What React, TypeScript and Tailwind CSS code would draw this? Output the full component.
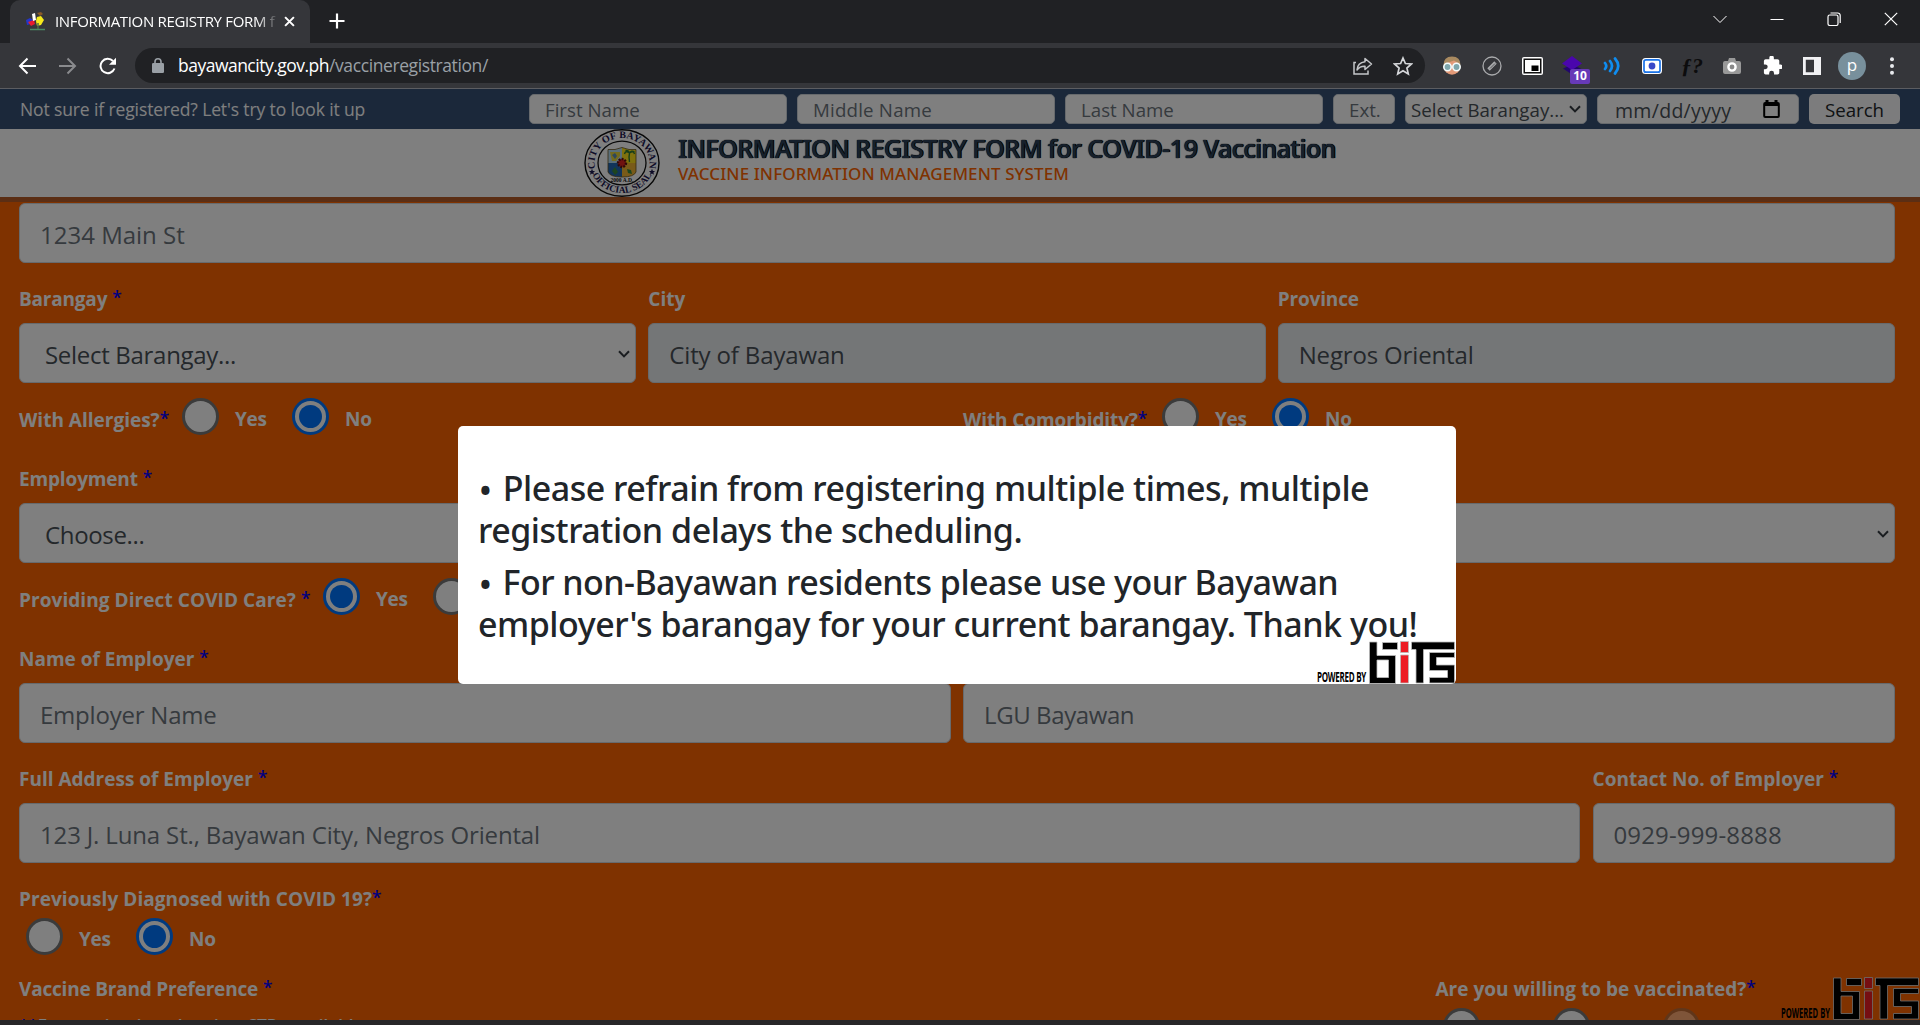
import React from 'react';

function Radio({ on, faded }: { on?: boolean; faded?: boolean }) {
  return (
    <span
      className={
        'flex size-[37px] shrink-0 items-center justify-center rounded-full border-[3px] bg-white ' +
        (on ? 'border-[#0075ff]' : 'border-[#767676]') +
        (faded ? ' opacity-45' : '')
      }
    >
      {on && <span className="size-[23px] rounded-full bg-[#0075ff]" />}
    </span>
  );
}

function Star({ gap = true }: { gap?: boolean }) {
  return <span className={'align-[2px] text-[17.5px] leading-none font-semibold text-[#0000ff] ' + (gap ? 'ml-[5px]' : '')}>*</span>;
}

function Label({ text, star, tight, className = 'h-[60px]' }: { text: string; star?: boolean; tight?: boolean; className?: string }) {
  return (
    <div className={'pt-6 text-[19px] leading-6 font-bold whitespace-nowrap text-white ' + className}>
      {text}
      {star && <Star gap={!tight} />}
    </div>
  );
}

function Field({ text = '', tone = 'placeholder', select, tracking = 'tracking-[-0.15px]' }: { text?: string; tone?: 'placeholder' | 'value' | 'disabled'; select?: boolean; tracking?: string }) {
  return (
    <div
      className={
        'flex h-[60px] items-center rounded-[6px] border border-[#ced4da] pt-1 text-[24px] whitespace-nowrap ' +
        tracking +
        (tone === 'placeholder' ? ' bg-white text-[#6c757d] ' : tone === 'value' ? ' bg-white text-[#495057] ' : ' bg-[#e9ecef] text-[#495057] ') +
        (select ? 'pr-[5px] pl-[25px]' : 'px-[20px]')
      }
    >
      <span className="grow">{text}</span>
      {select && <Chevron className="mb-[3px] h-[8px] w-[12px]" />}
    </div>
  );
}

function Chevron({ className }: { className: string }) {
  return (
    <svg viewBox="0 0 12 8" className={className} fill="none" stroke="#343a40" strokeWidth="2">
      <path d="M1 1.2 6 6.4 11 1.2" />
    </svg>
  );
}

function Options({ picked, third }: { picked?: 'Yes' | 'No'; third?: boolean }) {
  return (
    <>
      {(['Yes', 'No'] as const).map((name) => (
        <div key={name} className="flex w-[110px] shrink-0 items-center gap-4">
          <Radio on={picked === name} />
          <span className="pt-[5px] text-[19px] leading-6 font-bold tracking-[-0.3px] text-white">{name}</span>
        </div>
      ))}
      {third && <Radio faded />}
    </>
  );
}

function SearchInput({ text, className }: { text: string; className: string }) {
  return (
    <div className={'flex h-[30px] items-center rounded-[5px] border border-[#ced4da] bg-white pt-[2px] text-[18.7px] whitespace-nowrap ' + className}>
      {text}
    </div>
  );
}

function BitsLogo({ className, edge }: { className: string; edge: string }) {
  return (
    <svg viewBox="0 0 139 43" className={className}>
      <text x="0" y="41" fontFamily="Open Sans, sans-serif" fontWeight="700" fontSize="13.5" textLength="49" lengthAdjust="spacingAndGlyphs" fill="#000">
        POWERED BY
      </text>
      <g transform="translate(52.5 0.5)" fill="#000" stroke={edge} strokeWidth="0.8">
        <path d="M0 0.5h7.5v13.5h18.5v28H0zM7.5 18.5v17.5h11.5v-17.5z" fillRule="evenodd" />
        <path d="M13 1h15v7H13z" />
        <path d="M42 0.5h43v7.5H54v33.5h-7.500V8H42z" />
        <path d="M60 11h25v5H67v7.500h18v18H60v-5.500h18V29H60z" />
        <path d="M31 0h8v11h-8zM31 13.500h8v28h-8z" fill="#ed1c24" />
      </g>
    </svg>
  );
}

function Seal() {
  return (
    <svg viewBox="0 0 76 68" className="h-[68px] w-[76px]">
      <defs>
        <path id="arcTop" d="M13.250 44.900 A27.500 25 0 1 1 62.750 44.900" />
        <path id="arcBottom" d="M8.900 46.500 A32 30 0 0 0 67.100 46.500" />
      </defs>
      <ellipse cx="38" cy="34" rx="37" ry="33.300" fill="#fff" stroke="#111" strokeWidth="1.400" />
      <ellipse cx="38" cy="34" rx="24" ry="21.800" fill="#fff" stroke="#111" strokeWidth="1.300" />
      <g fontFamily="Liberation Serif, serif" fontWeight="700" fill="#1d1850">
        <text fontSize="10" letterSpacing="0.1">
          <textPath href="#arcTop" startOffset="50%" textAnchor="middle">CITY OF BAYAWAN</textPath>
        </text>
        <text fontSize="9.500">
          <textPath href="#arcBottom" startOffset="50%" textAnchor="middle">OFFICIAL SEAL</textPath>
        </text>
        <text x="38" y="53" fontSize="5.500" textAnchor="middle" fill="#111">2000 A.D.</text>
      </g>
      <path d="M0-3.200L.9-1H3.100L1.400.500 2 2.800 0 1.500-2 2.800-1.400.500-3.100-1H-.9z" transform="translate(8 43)" fill="#1d1850" />
      <path d="M0-3.200L.9-1H3.100L1.400.500 2 2.800 0 1.500-2 2.800-1.400.500-3.100-1H-.9z" transform="translate(68 43)" fill="#1d1850" />
      <path d="M24 20.500q7 1 14-2v15.500H24z" fill="#b5dcf2" />
      <path d="M38 18.500q7 3 14 2V34H38z" fill="#ffe21a" />
      <path d="M24 34h14v14q-12 0-14-5z" fill="#2268b5" />
      <path d="M38 34h14v9q-2 5-14 5z" fill="#f2b632" />
      <path d="M24 20.500q7 1 14-2 7 3 14 2v22.500q-2 5-14 5t-14-5z" fill="none" stroke="#6b5420" strokeWidth="0.800" />
      <path d="M45.500 33q-1-5 0-9m0 0q-4-3-5 1m5-1q4-3 5 1m-5-1q-1-3-4-2.500m4 2.500q2-3 5-1" stroke="#2f7d32" strokeWidth="1.400" fill="none" />
      <path d="M26 23h10v4l-4 5h-4z" fill="#e6d53b" />
      <path d="M28 26l3-2 2 3-2 3z" fill="#5c8fb5" />
      <path d="M28 42l3-4 3 5-3 3zM43 40l4 1 1 4-4-1z" fill="#3b8a3e" />
      <circle cx="38" cy="34" r="4" fill="#e02420" stroke="#5b1210" strokeWidth="2.400" strokeDasharray="1.800 1.200" />
    </svg>
  );
}

function TabStrip() {
  return (
    <div className="flex h-[43px] items-end bg-[#202124] pl-[10px]">
      <div className="flex h-full w-[300px] items-center rounded-t-[10px] bg-[#35363a] pr-[14px] pb-px pl-[16px]">
        <svg viewBox="0 0 20 20" className="size-5 shrink-0">
          <path d="M0 9l4-2 3 2-2 4-4 1z" fill="#2436c9" />
          <path d="M2 11l6-2 1 4-4 2z" fill="#e81c2e" />
          <path d="M6 3l3-1 1 7-3 1z" fill="#fff" />
          <path d="M11 6l4-1 3 4-3 5-4 1-1-5z" fill="#f6ea1c" />
          <path d="M11 2l4-1 2 2-3 2z" fill="#8a5a28" />
          <path d="M12 12v6" stroke="#4b6e46" strokeWidth="1.500" />
          <path d="M4 18.500h15" stroke="#4b8a63" strokeWidth="1.500" />
        </svg>
        <div className="ml-[9px] w-[224px] shrink-0 overflow-hidden text-[15px] tracking-[-0.33px] whitespace-nowrap text-white [mask-image:linear-gradient(to_right,#000_90%,transparent_100%)]">
          INFORMATION REGISTRY FORM f
        </div>
        <svg viewBox="0 0 12 12" className="ml-[5px] size-[11px] shrink-0" stroke="#fff" strokeWidth="2.200">
          <path d="M1.200 1.200l9.600 9.600M10.800 1.200l-9.600 9.600" />
        </svg>
      </div>
      <svg viewBox="0 0 16 16" className="mb-[14px] ml-[19px] size-4" stroke="#fff" strokeWidth="2.200">
        <path d="M8 .500v15M.500 8h15" />
      </svg>
      <div className="ml-auto flex h-full items-center gap-[43px] pr-[22px] pb-[6px]">
        <svg viewBox="0 0 14 14" className="size-[14px]" fill="none" stroke="#fff" strokeWidth="1">
          <path d="M.500 4 7 10.500 13.500 4" />
        </svg>
        <svg viewBox="0 0 14 14" className="size-[14px]" stroke="#fff" strokeWidth="1">
          <path d="M.500 7.500h13" />
        </svg>
        <svg viewBox="0 0 14 14" className="size-[14px]" fill="none" stroke="#fff" strokeWidth="1.200">
          <rect x="1" y="3" width="10" height="10.500" rx="1.800" />
          <path d="M3.500 1h7.200a2.500 2.500 0 0 1 2.500 2.500V11" />
        </svg>
        <svg viewBox="0 0 14 14" className="size-[14px]" stroke="#fff" strokeWidth="1.200">
          <path d="M.800.800l12.400 12.400M13.200.800L.800 13.200" />
        </svg>
      </div>
    </div>
  );
}

function Extensions() {
  return (
    <div className="flex items-center">
      <div className="flex w-10 justify-center">
        <svg viewBox="0 0 20 20" className="size-5">
          <circle cx="10" cy="10.500" r="8.300" fill="#e39a78" />
          <path d="M1.500 9q0-8.500 8.500-8.500T18.500 9q-3-3-6.500-4.500Q6 6 1.500 9z" fill="#a98a60" />
          <circle cx="5.500" cy="11" r="3.700" fill="#7fa7ac" stroke="#f4fbfb" strokeWidth="1.600" />
          <circle cx="14.500" cy="11" r="3.700" fill="#7fa7ac" stroke="#f4fbfb" strokeWidth="1.600" />
        </svg>
      </div>
      <div className="flex w-10 justify-center">
        <svg viewBox="0 0 20 20" className="size-5" fill="none" stroke="#a9aaac">
          <circle cx="10" cy="10" r="9" strokeWidth="1.300" />
          <path d="M6.500 13.500l7-7" strokeWidth="3.400" />
          <path d="M8 12.500l5-5" strokeWidth="1" stroke="#55565a" />
        </svg>
      </div>
      <div className="flex w-10 justify-center">
        <svg viewBox="0 0 21 18" className="h-[18px] w-[21px]">
          <rect width="21" height="18" rx="2" fill="#fff" />
          <rect x="2.250" y="2.250" width="16.500" height="13.500" fill="#fff" stroke="#111" strokeWidth="1.500" />
          <rect x="9.500" y="8.500" width="7" height="5.500" fill="#000" />
        </svg>
      </div>
      <div className="relative flex w-10 justify-center">
        <svg viewBox="0 0 20 20" className="size-5">
          <path d="M1 12.500l9-4 9 4-9 6z" fill="#23066e" />
          <path d="M0 7.500L10 0l10 7.500L10 14z" fill="#4a06ad" />
        </svg>
        <span className="absolute top-[13px] left-[18px] flex h-[15px] w-5 items-center justify-center rounded-[2px] bg-[#673ab7] text-[12px] font-bold text-white">10</span>
      </div>
      <div className="flex w-10 justify-center">
        <svg viewBox="0 0 18 18" className="size-[18px]" fill="none" stroke="#0f8df0" strokeWidth="2.700" strokeLinecap="round">
          <path d="M2 6q2.500 3 0 6M7 4q4 5 0 10M12 1.500q6.500 7.500 0 15" />
        </svg>
      </div>
      <div className="flex w-10 justify-center">
        <svg viewBox="0 0 20 16" className="h-4 w-5">
          <rect width="20" height="16" rx="3.500" fill="#fff" />
          <rect x="2" y="1.800" width="16" height="12.400" rx="2" fill="#fff" stroke="#1a73e8" strokeWidth="1.700" />
          <circle cx="10" cy="8" r="3.400" fill="#3949c8" />
        </svg>
      </div>
      <div className="flex w-10 justify-center font-[Liberation_Serif,serif] text-[22px] leading-5 font-bold text-[#0c0c0d] italic">ƒ?</div>
      <div className="flex w-10 justify-center">
        <svg viewBox="0 0 18 18" className="size-[18px]">
          <path d="M2 4h3l1-3h6l1 3h3q2 0 2 2v9q0 2-2 2H2q-2 0-2-2V6q0-2 2-2z" fill="#999" />
          <circle cx="9" cy="10" r="3.600" fill="#888" stroke="#fff" strokeWidth="2.400" />
        </svg>
      </div>
      <div className="flex w-10 justify-center">
        <svg viewBox="1 1.500 21 21" className="size-[19px]" fill="#fff">
          <path d="M20.500 11H19V7a2 2 0 0 0-2-2h-4V3.500a2.500 2.500 0 0 0-5 0V5H4a2 2 0 0 0-2 2v3.800h1.500a2.700 2.700 0 0 1 0 5.400H2V20a2 2 0 0 0 2 2h3.800v-1.500a2.700 2.700 0 0 1 5.400 0V22H17a2 2 0 0 0 2-2v-4h1.500a2.500 2.500 0 0 0 0-5z" />
        </svg>
      </div>
      <div className="flex w-10 justify-center">
        <svg viewBox="0 0 18 18" className="size-[18px]">
          <path d="M0 0h18v18H0zM2.800 2.800v12.400h8.200V2.800z" fillRule="evenodd" fill="#f1f1f3" />
        </svg>
      </div>
      <div className="flex w-10 justify-center">
        <span className="flex size-7 items-center justify-center rounded-full bg-[#78909c] pb-[2px] text-[17px] text-white">p</span>
      </div>
      <div className="flex w-10 justify-center">
        <svg viewBox="0 0 4 18" className="h-[18px] w-1" fill="#e8eaed">
          <circle cx="2" cy="2.200" r="2" />
          <circle cx="2" cy="9" r="2" />
          <circle cx="2" cy="15.800" r="2" />
        </svg>
      </div>
    </div>
  );
}

function Toolbar() {
  return (
    <div className="flex h-[46px] items-center border-b border-[#5c5d61] bg-[#35363a] pl-[18px]">
      <svg viewBox="0 0 18 18" className="size-[18px]" fill="none" stroke="#fff" strokeWidth="2">
        <path d="M18 9H2M9.500 1.500L2 9l7.500 7.500" />
      </svg>
      <svg viewBox="0 0 18 18" className="ml-[23px] size-[18px]" fill="none" stroke="#8a8b8e" strokeWidth="2">
        <path d="M0 9h16M8.500 1.500L16 9l-7.500 7.500" />
      </svg>
      <svg viewBox="0 0 18 18" className="ml-[22px] size-[18px]" fill="none" stroke="#fff" strokeWidth="2">
        <path d="M15.500 11.500A7.200 7.200 0 1 1 14 4" />
        <path d="M17 .800v7h-7z" fill="#fff" stroke="none" />
      </svg>
      <div className="ml-[18px] flex h-[35px] w-[1290px] shrink-0 items-center rounded-full bg-[#202124] pr-[12px] pl-[17px]">
        <svg viewBox="0 0 12 15" className="h-[15px] w-3">
          <rect y="5" width="12" height="10" rx="1.300" fill="#9aa0a6" />
          <path d="M3 6V3.800a3 3 0 0 1 6 0V6" fill="none" stroke="#9aa0a6" strokeWidth="1.600" />
        </svg>
        <div className="ml-[14px] text-[17.5px] tracking-[-0.51px] whitespace-nowrap text-white">
          bayawancity.gov.ph<span className="tracking-[-0.4px] text-[#9aa0a6]">/vaccineregistration/</span>
        </div>
        <svg viewBox="0 0 20 18" className="ml-auto h-[18px] w-5" fill="none" stroke="#c4c6c9" strokeWidth="1.500">
          <path d="M3 5.500H1v11.500h14v-3.500" />
          <path d="M12 1.500l6.500 5.500-6.500 5.500V9.300Q7 9 4 13q.500-7.500 8-8.300z" strokeLinejoin="round" />
        </svg>
        <svg viewBox="0 0 20 20" className="ml-[20px] size-5" fill="none" stroke="#d4d6d9" strokeWidth="1.700">
          <path d="M10 2l2.400 5.500 6 .500-4.500 4 1.400 5.900L10 14.800l-5.300 3.100L6.100 12 1.600 8l6-.500z" />
        </svg>
      </div>
      <div className="ml-[7px]">
        <Extensions />
      </div>
    </div>
  );
}

function SearchBar() {
  return (
    <div className="flex h-10 items-center bg-[#375175] pr-5 pl-5 text-[#6c757d]">
      <span className="w-[509px] text-[17.5px] tracking-[-0.12px] whitespace-nowrap text-white">Not sure if registered? Let's try to look it up</span>
      <SearchInput text="First Name" className="w-[258px] pl-[15px]" />
      <SearchInput text="Middle Name" className="ml-[10px] w-[258px] pl-[15px] tracking-[0.2px]" />
      <SearchInput text="Last Name" className="ml-[10px] w-[258px] pl-[15px]" />
      <SearchInput text="Ext." className="ml-[10px] w-[62px] pl-[15px]" />
      <div className="ml-[10px] flex h-[30px] w-[182px] items-center rounded-[5px] border border-[#ced4da] bg-white pt-[3px] pl-[5px] text-[18.7px] whitespace-nowrap text-[#495057]">
        Select Barangay...
        <Chevron className="mb-[4px] ml-[5px] h-[8px] w-[12px]" />
      </div>
      <div className="ml-[10px] flex h-[30px] w-[202px] items-center justify-between rounded-[5px] border border-[#ced4da] bg-white pt-[3px] pr-[18px] pl-[17px] text-[19.5px] tracking-[0.3px] text-[#495057]">
        mm/dd/yyyy
        <svg viewBox="0 0 17 18" className="mb-[4px] h-[18px] w-[17px]" fill="none" stroke="#000" strokeWidth="2">
          <rect x="1.200" y="3" width="14.600" height="14" rx="1" />
          <path d="M1 4.500h15M4 0v3M13 0v3" strokeWidth="3" />
        </svg>
      </div>
      <div className="ml-[10px] flex h-[30px] w-[91px] items-center justify-center rounded-[5px] bg-[#f8f9fa] pt-[3px] text-[18.700px] text-[#212529]">Search</div>
    </div>
  );
}

export default function App() {
  return (
    <div className="flex h-[1025px] w-[1920px] flex-col overflow-hidden bg-[#272628] font-[Open_Sans,sans-serif]">
      <TabStrip />
      <Toolbar />

      <div className="relative h-[931px] overflow-hidden bg-[#ff6400]">
        <SearchBar />
        <header className="flex h-[73px] border-b-[5px] border-[#b65c28] bg-white pl-[584px] font-[Noto_Sans,sans-serif]">
          <Seal />
          <div className="ml-[18px] whitespace-nowrap">
            <h1 className="pt-[4px] text-[25px] leading-[30px] font-medium tracking-[-0.48px] text-[#2c4058] [text-shadow:0_0_1px_#000,0_0_1px_#000,1px_0_0_#111]">
              INFORMATION REGISTRY FORM for COVID-19 Vaccination
            </h1>
            <h2 className="text-[17px] leading-[22px] font-medium tracking-[0.1px] text-[#ff6400]">VACCINE INFORMATION MANAGEMENT SYSTEM</h2>
          </div>
        </header>

        <main className="px-[19px] pt-px pr-[25px]">
          <Field text="1234 Main St" tracking="tracking-normal" />
          <div className="grid grid-cols-3 gap-x-3">
            <div>
              <Label text="Barangay" star className="h-[60px] tracking-[-0.2px]" />
              <Field text="Select Barangay..." tone="value" select tracking="tracking-[-0.3px]" />
            </div>
            <div>
              <Label text="City" />
              <Field text="City of Bayawan" tone="disabled" />
            </div>
            <div>
              <Label text="Province" className="h-[60px] tracking-[-0.15px]" />
              <Field text="Negros Oriental" tone="disabled" />
            </div>
          </div>

          <div className="grid grid-cols-2 gap-x-3">
            <div className="flex h-[60px] items-center pt-[7px]">
              <Label text="With Allergies?" star tight className="-mt-[18px] w-[163px]" />
              <Options picked="No" />
            </div>
            <div className="flex h-[60px] items-center pt-[7px]">
              <Label text="With Comorbidity?" star tight className="-mt-[18px] w-[199px] tracking-[-0.1px]" />
              <Options picked="No" />
            </div>
          </div>

          <div className="grid grid-cols-2 gap-x-3">
            <div>
              <Label text="Employment" star className="h-[60px] tracking-[-0.15px]" />
              <Field text="Choose..." tone="value" select tracking="tracking-[-0.35px]" />
            </div>
            <div className="pt-[60px]">
              <Field tone="value" select />
            </div>
          </div>

          <div className="flex h-[60px] items-center pt-[7px]">
            <Label text="Providing Direct COVID Care?" star className="-mt-[18px] w-[304px] tracking-[0.07px]" />
            <Options picked="Yes" />
          </div>

          <div className="grid grid-cols-2 gap-x-3">
            <div>
              <Label text="Name of Employer" star />
              <Field text="Employer Name" tracking="tracking-[-0.22px]" />
            </div>
            <div className="pt-[60px]">
              <Field text="LGU Bayawan" tracking="tracking-[-0.4px]" />
            </div>
          </div>

          <div className="grid grid-cols-[1561px_302px] gap-x-[12.5px]">
            <div>
              <Label text="Full Address of Employer" star />
              <Field text="123 J. Luna St., Bayawan City, Negros Oriental" />
            </div>
            <div>
              <Label text="Contact No. of Employer" star className="h-[60px] tracking-[0.05px]" />
              <Field text="0929-999-8888" tracking="tracking-[0.15px]" />
            </div>
          </div>

          <div className="h-[90px]">
            <Label text="Previously Diagnosed with COVID 19?" star tight className="h-[55px] tracking-[0.06px]" />
            <div className="flex pl-[7px]">
              <Options picked="No" />
            </div>
          </div>

          <div className="grid grid-cols-[1416.5px_1fr]">
            <div>
              <Label text="Vaccine Brand Preference" star className="h-[62px] tracking-[-0.2px]" />
              <p className="-mt-[2px] text-[17px] leading-6 font-semibold whitespace-nowrap text-white">
                <span className="text-[#0000ff]">**</span>For vaccination planning, STPs available
              </p>
            </div>
            <div>
              <Label text="Are you willing to be vaccinated?" star tight className="h-[55px]" />
              <div className="flex pl-[7px]">
                <Options third />
              </div>
            </div>
          </div>
        </main>

        <BitsLogo className="absolute right-0 bottom-0 h-[43px] w-[139px]" edge="#ddd" />

        <div className="absolute inset-0 bg-black/50" />

        <div
          role="dialog"
          className="absolute top-[337px] left-[458px] h-[258px] w-[998px] rounded-[5px] bg-white px-5 pt-[41px] font-[Noto_Sans,sans-serif] text-[34px] leading-[42px] font-medium tracking-[-0.48px] text-[#212529]"
        >
          <p className="whitespace-nowrap">
            <span className="mr-[3px] ml-px align-[-2px] leading-none">•</span> Please refrain from registering multiple times, multiple
            <br />
            registration delays the scheduling.
          </p>
          <p className="mt-[10px] whitespace-nowrap">
            <span className="tracking-[-0.55px]">
              <span className="mr-[3px] ml-px align-[-2px] leading-none">•</span> For non-Bayawan residents please use your Bayawan
            </span>
            <br />
            employer's barangay for your current barangay. Thank you!
          </p>
          <BitsLogo className="absolute right-0 bottom-0 h-[43px] w-[139px]" edge="#bbb" />
        </div>
      </div>
    </div>
  );
}
